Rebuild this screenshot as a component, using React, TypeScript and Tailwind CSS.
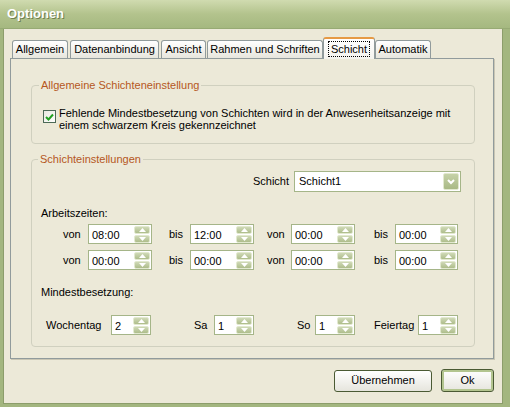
import React from "react";

function Arrow({ up }: { up?: boolean }) {
  return (
    <svg width="7" height="4" viewBox="0 0 7 4" className="block">
      <path d={up ? "M0 4 L3.5 0 L7 4 Z" : "M0 0 L3.5 4 L7 0 Z"} fill="#ffffff" />
    </svg>
  );
}

function SpinButtons() {
  return (
    <div className="flex flex-col gap-[1px] mr-[1px]">
      <div className="w-[16px] h-[8px] rounded-[2px] border border-[#e2e9cf] bg-gradient-to-b from-[#cfd9b6] to-[#aebd8b] flex items-center justify-center">
        <Arrow up />
      </div>
      <div className="w-[16px] h-[8px] rounded-[2px] border border-[#e2e9cf] bg-gradient-to-b from-[#cfd9b6] to-[#aebd8b] flex items-center justify-center">
        <Arrow />
      </div>
    </div>
  );
}

function SpinBox({ value, w }: { value: string; w: string }) {
  return (
    <div className={`flex items-center h-[20px] border border-[#a5b588] bg-white ${w}`}>
      <span className="flex-1 pl-[3px] pt-[2px] text-[11px] leading-[13px] text-black">{value}</span>
      <SpinButtons />
    </div>
  );
}

function Lbl({ children, w }: { children: React.ReactNode; w: string }) {
  return <span className={`text-[11px] leading-[13px] text-black ${w}`}>{children}</span>;
}

const tabs: { label: string; w: string; ml: string; sel?: boolean }[] = [
  { label: "Allgemein", w: "w-[56px]", ml: "ml-[2px]" },
  { label: "Datenanbindung", w: "w-[89px]", ml: "ml-[2px]" },
  { label: "Ansicht", w: "w-[45px]", ml: "ml-[2px]" },
  { label: "Rahmen und Schriften", w: "w-[116px]", ml: "ml-[1px]" },
  { label: "Schicht", w: "w-[52px]", ml: "ml-0", sel: true },
  { label: "Automatik", w: "w-[56px]", ml: "ml-0" },
];

export default function App() {
  return (
    <div className="w-[510px] h-[407px] flex flex-col bg-[#a3b67f] font-['Liberation_Sans',Arial,sans-serif] overflow-hidden">
      {/* Title bar */}
      <div className="h-[29px] shrink-0 flex items-center px-[7px] bg-gradient-to-b from-[#d0dbb0] via-[#b3c38d] to-[#a5b880] border-b border-[#97aa74]">
        <span className="text-[13px] font-bold text-white [text-shadow:1px_1px_0_#6f8050]">Optionen</span>
      </div>

      <div className="flex-1 flex flex-col pl-[3px] pr-[7px] pb-[3px]">
        <div className="flex-1 flex flex-col bg-[#ece9d8] border-l border-r border-b border-[#8c9d6b] pt-[8px] pl-[6px] pr-[8px]">
          {/* Tabs */}
          <div className="flex items-end h-[21px] relative z-10">
            {tabs.map((t) =>
              t.sel ? (
                <div
                  key={t.label}
                  className={`${t.w} ${t.ml} h-[22px] -mb-[1px] rounded-t-[3px] border-x border-[#919b9c] border-t-[2px] border-t-[#e69a45] bg-gradient-to-b from-white to-[#f4f3ee] flex items-center justify-center`}
                >
                  <span className="px-[2px] h-[16px] border border-dotted border-black flex items-center text-[11px] leading-[13px] text-black">
                    {t.label}
                  </span>
                </div>
              ) : (
                <div
                  key={t.label}
                  className={`${t.w} ${t.ml} h-[18px] rounded-t-[3px] border-x border-t border-[#919b9c] bg-gradient-to-b from-white to-[#e7e6dd] flex items-center justify-center text-[11px] leading-[13px] text-black`}
                >
                  {t.label}
                </div>
              )
            )}
          </div>

          {/* Panel */}
          <div className="border border-[#919b9c] shadow-[1px_1px_0_#c9c6b4] bg-[#ece9d8] pl-[20px] pr-[18px] pb-[11px]">
            <fieldset className="mt-[20px] border border-[#d0d0bf] rounded-[4px] px-[11px] pb-[12px]">
              <legend className="ml-[-4px] px-[2px] text-[11px] leading-[13px] text-[#b5571d]">
                Allgemeine Schichteneinstellung
              </legend>
              <div className="flex items-start gap-[3px] pt-[15px]">
                <div className="mt-[3px] w-[13px] h-[13px] shrink-0 border border-[#4c6a57] bg-gradient-to-br from-[#e8e8e0] to-white flex items-center justify-center">
                  <svg width="9" height="8" viewBox="0 0 9 8">
                    <path d="M1 4 L3.5 6.5 L8 1.5" stroke="#21a121" strokeWidth="2" fill="none" />
                  </svg>
                </div>
                <div className="text-[11px] leading-[12px] text-black">
                  Fehlende Mindestbesetzung von Schichten wird in der Anwesenheitsanzeige mit
                  <br />
                  einem schwarzem Kreis gekennzeichnet
                </div>
              </div>
            </fieldset>

            <fieldset className="mt-[9px] border border-[#d0d0bf] rounded-[4px] pb-[11px]">
              <legend className="ml-[6px] px-[2px] text-[11px] leading-[13px] text-[#b5571d]">
                Schichteinstellungen
              </legend>
              {/* Schicht combo */}
              <div className="flex items-center justify-end pr-[13px] pt-[5px]">
                <span className="text-[11px] leading-[13px] text-black mr-[5px]">Schicht</span>
                <div className="w-[167px] h-[21px] border border-[#a5b588] bg-white flex items-center">
                  <span className="flex-1 pl-[4px] text-[11px] leading-[13px] text-black">Schicht1</span>
                  <div className="w-[16px] h-[17px] mr-[1px] rounded-[2px] border border-[#e2e9cf] bg-gradient-to-b from-[#c6d2a8] to-[#a9b985] flex items-center justify-center">
                    <svg width="8" height="6" viewBox="0 0 8 6">
                      <path d="M1 1 L4 4 L7 1" stroke="#ffffff" strokeWidth="2" fill="none" />
                    </svg>
                  </div>
                </div>
              </div>

              <div className="pl-[9px] mt-[15px] text-[11px] leading-[13px] text-black">Arbeitszeiten:</div>

              <div className="flex items-center pl-[31px] mt-[4px]">
                <Lbl w="w-[25px]">von</Lbl>
                <SpinBox value="08:00" w="w-[64px]" />
                <Lbl w="w-[21px] ml-[17px]">bis</Lbl>
                <SpinBox value="12:00" w="w-[64px]" />
                <Lbl w="w-[24px] ml-[13px]">von</Lbl>
                <SpinBox value="00:00" w="w-[64px]" />
                <Lbl w="w-[21px] ml-[19px]">bis</Lbl>
                <SpinBox value="00:00" w="w-[63px]" />
              </div>
              <div className="flex items-center pl-[31px] mt-[6px]">
                <Lbl w="w-[25px]">von</Lbl>
                <SpinBox value="00:00" w="w-[64px]" />
                <Lbl w="w-[21px] ml-[17px]">bis</Lbl>
                <SpinBox value="00:00" w="w-[64px]" />
                <Lbl w="w-[24px] ml-[13px]">von</Lbl>
                <SpinBox value="00:00" w="w-[64px]" />
                <Lbl w="w-[21px] ml-[19px]">bis</Lbl>
                <SpinBox value="00:00" w="w-[63px]" />
              </div>

              <div className="pl-[9px] mt-[16px] text-[11px] leading-[13px] text-black">Mindestbesetzung:</div>

              <div className="flex items-center pl-[14px] mt-[16px]">
                <Lbl w="w-[65px]">Wochentag</Lbl>
                <SpinBox value="2" w="w-[40px]" />
                <Lbl w="w-[20px] ml-[43px]">Sa</Lbl>
                <SpinBox value="1" w="w-[40px]" />
                <Lbl w="w-[18px] ml-[43px]">So</Lbl>
                <SpinBox value="1" w="w-[40px]" />
                <Lbl w="w-[44px] ml-[19px]">Feiertag</Lbl>
                <SpinBox value="1" w="w-[40px]" />
              </div>
            </fieldset>
          </div>

          {/* Footer buttons */}
          <div className="flex justify-end items-center gap-[9px] mt-[10px]">
            <button className="w-[98px] h-[22px] rounded-[3px] border border-[#4a5a33] bg-gradient-to-b from-white to-[#e6e5dd] text-[11px] text-black">
              Übernehmen
            </button>
            <button className="w-[53px] h-[23px] rounded-[3px] border border-[#4a5a33] bg-gradient-to-b from-white to-[#e6e5dd] shadow-[inset_0_0_0_2px_#b3c58f] text-[11px] text-black">
              Ok
            </button>
          </div>
        </div>
      </div>
    </div>
  );
}
